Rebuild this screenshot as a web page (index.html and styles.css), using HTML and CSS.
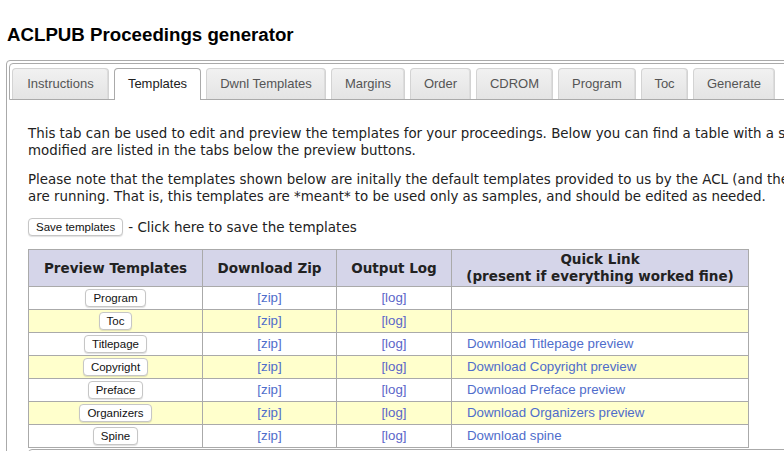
FILE: index.html
```html
<!DOCTYPE html>
<html>
<head>
<meta charset="utf-8">
<title>ACLPUB Proceedings generator</title>
<link rel="stylesheet" href="styles.css">
</head>
<body>
<h1 class="title">ACLPUB Proceedings generator</h1>
<div class="widget">
  <ul class="tabnav">
    <li class="tab tab-instr">Instructions</li>
    <li class="tab tab-tpl active">Templates</li>
    <li class="tab tab-dwnl">Dwnl Templates</li>
    <li class="tab tab-margins">Margins</li>
    <li class="tab tab-order">Order</li>
    <li class="tab tab-cdrom">CDROM</li>
    <li class="tab tab-program">Program</li>
    <li class="tab tab-toc">Toc</li>
    <li class="tab tab-generate">Generate</li>
  </ul>
  <div class="panel">
    <p class="intro">This tab can be used to edit and preview the templates for your proceedings. Below you can find a table with a set of buttons to preview them; the templates that can be<br>modified are listed in the tabs below the preview buttons.</p>
    <p class="intro">Please note that the templates shown below are initally the default templates provided to us by the ACL (and they may be out of date by the time you<br>are running. That is, this templates are *meant* to be used only as samples, and should be edited as needed.</p>
    <div class="saverow"><button class="btn">Save templates</button><span class="savetext">- Click here to save the templates</span></div>
    <table class="tpl">
      <colgroup><col class="c1"><col class="c2"><col class="c3"><col class="c4"></colgroup>
      <tr class="hdr"><th>Preview Templates</th><th>Download Zip</th><th>Output Log</th><th>Quick Link<br>(present if everything worked fine)</th></tr>
      <tr><td class="ctr"><button class="btn">Program</button></td><td class="ctr"><a href="#">[zip]</a></td><td class="ctr"><a href="#" class="log">[log]</a></td><td class="ql"></td></tr>
      <tr class="alt"><td class="ctr"><button class="btn">Toc</button></td><td class="ctr"><a href="#">[zip]</a></td><td class="ctr"><a href="#" class="log">[log]</a></td><td class="ql"></td></tr>
      <tr><td class="ctr"><button class="btn">Titlepage</button></td><td class="ctr"><a href="#">[zip]</a></td><td class="ctr"><a href="#" class="log">[log]</a></td><td class="ql"><a href="#">Download Titlepage preview</a></td></tr>
      <tr class="alt"><td class="ctr"><button class="btn">Copyright</button></td><td class="ctr"><a href="#">[zip]</a></td><td class="ctr"><a href="#" class="log">[log]</a></td><td class="ql"><a href="#">Download Copyright preview</a></td></tr>
      <tr><td class="ctr"><button class="btn">Preface</button></td><td class="ctr"><a href="#">[zip]</a></td><td class="ctr"><a href="#" class="log">[log]</a></td><td class="ql"><a href="#">Download Preface preview</a></td></tr>
      <tr class="alt"><td class="ctr"><button class="btn">Organizers</button></td><td class="ctr"><a href="#">[zip]</a></td><td class="ctr"><a href="#" class="log">[log]</a></td><td class="ql"><a href="#">Download Organizers preview</a></td></tr>
      <tr><td class="ctr"><button class="btn">Spine</button></td><td class="ctr"><a href="#">[zip]</a></td><td class="ctr"><a href="#" class="log">[log]</a></td><td class="ql"><a href="#">Download spine</a></td></tr>
    </table>
    <div class="subwidget"><div class="subnav"></div></div>
  </div>
</div>
</body>
</html>
```
FILE: styles.css
```css
html, body {
  margin: 0;
  padding: 0;
  overflow: hidden;
  background: #fff;
}
body {
  font-family: "DejaVu Sans", Verdana, sans-serif;
  color: #222;
}
.title {
  font: bold 18.7px/22px "Liberation Sans", Arial, sans-serif;
  color: #000;
  margin: 0;
  padding: 24px 0 0 7px;
}
.widget {
  margin: 14px 0 0 6px;
  width: 1000px;
  border: 1px solid #aaa;
  border-radius: 4px;
  padding: 2px;
}
.tabnav {
  list-style: none;
  margin: 0;
  padding: 4px 2px 0;
  display: flex;
  align-items: flex-start;
  gap: 5px;
  border: 1px solid #aaa;
  border-radius: 4px 4px 0 0;
  background: #fff;
}
.tab {
  box-sizing: border-box;
  font: 13px/15px "Liberation Sans", Arial, sans-serif;
  color: #555;
  text-align: center;
  padding: 7px 0 8px;
  border: 1px solid #d3d3d3;
  border-bottom: 0;
  border-radius: 4px 4px 0 0;
  background: linear-gradient(#f1f1f1, #e4e4e4);
  box-shadow: inset -1px 0 0 #dcdcdc;
  white-space: nowrap;
}
.tab-instr { width: 97px; }
.tab-tpl { width: 87px; }
.tab-dwnl { width: 120px; }
.tab-margins { width: 74px; }
.tab-order { width: 61px; }
.tab-cdrom { width: 77px; }
.tab-program { width: 78px; }
.tab-toc { width: 47px; }
.tab-generate { width: 82px; }
.tab.active {
  background: #fff;
  color: #212121;
  border-color: #aaa;
  box-shadow: none;
  padding-bottom: 9px;
  margin-bottom: -1px;
}
.panel {
  padding: 13px 19px 0;
}
.intro {
  margin: 12px 0;
  font-size: 13.4px;
  line-height: 17px;
  white-space: nowrap;
}
.saverow {
  display: flex;
  align-items: center;
  height: 20px;
  font-size: 13.5px;
  white-space: nowrap;
}
.savetext {
  margin-left: 5px;
}
.btn {
  font: 11.5px/16px "Liberation Sans", Arial, sans-serif;
  color: #111;
  height: 18px;
  padding: 0 7px;
  background: #fff;
  border: 1px solid #c6c6c6;
  border-radius: 4px;
  box-shadow: 0 1px 1px rgba(0, 0, 0, 0.12);
  margin: 0;
}
.tpl {
  margin-top: 12px;
  border-collapse: collapse;
  table-layout: fixed;
  width: 720px;
  border: 1px solid #aaa;
}
.c1 { width: 174px; }
.c2 { width: 134px; }
.c3 { width: 115px; }
.c4 { width: 297px; }
.tpl th, .tpl td {
  border: 1px solid #aaa;
  padding: 0;
}
.tpl th {
  background: #d5d5e9;
  font-size: 13.5px;
  line-height: 17px;
  font-weight: bold;
  color: #222;
  height: 36px;
}
.tpl td {
  height: 22px;
  font: 13.3px/16px "Liberation Sans", Arial, sans-serif;
}
.tpl tr.alt td {
  background: #ffffcc;
}
.ctr {
  text-align: center;
}
.ql {
  padding-left: 15px !important;
}
.tpl a {
  color: #4f6dcb;
  text-decoration: none;
}
.tpl a.log {
  color: #5b66c9;
}
.subwidget {
  margin-top: 1px;
  width: 1000px;
  border: 1px solid #aaa;
  border-radius: 4px;
  padding: 1px;
  height: 20px;
}
.subnav {
  border: 1px solid #aaa;
  border-radius: 4px 4px 0 0;
  height: 20px;
}
```
